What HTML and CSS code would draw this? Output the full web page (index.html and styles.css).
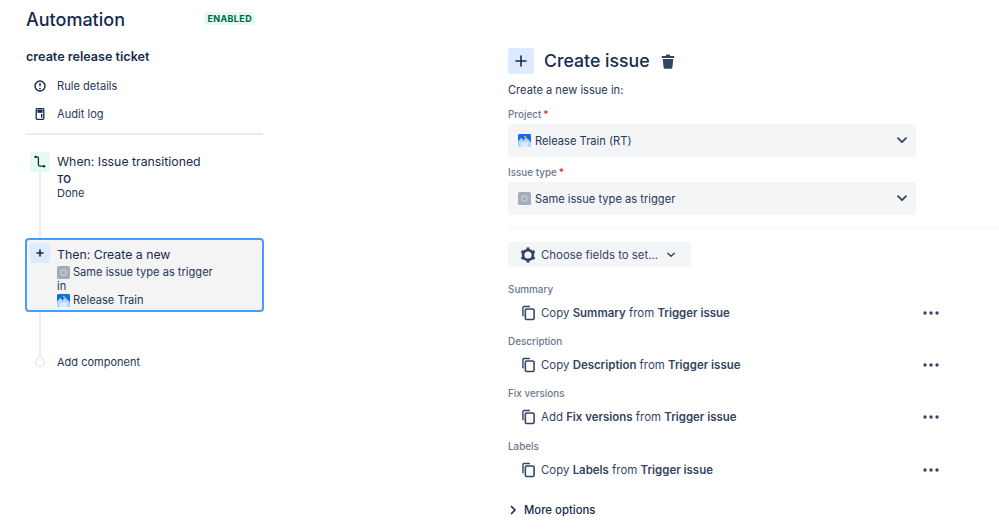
FILE: index.html
```html
<!DOCTYPE html>
<html lang="en">
<head>
<meta charset="utf-8">
<title>Automation</title>
<link rel="stylesheet" href="styles.css">
</head>
<body>
<svg class="defs" width="0" height="0" aria-hidden="true">
  <defs>
    <symbol id="proj" viewBox="0 0 14 14">
      <rect width="14" height="14" rx="1.5" fill="#0f6fe6"/>
      <path d="M0 12 L0 8 L3.5 4 L6 7 L8.5 3.5 L14 9 L14 14 L0 14Z" fill="#b3d4ff"/>
      <path d="M3 14 V9 H11 V14Z" fill="#deebff"/>
      <circle cx="7.5" cy="3" r="1" fill="#ffc400"/>
    </symbol>
    <symbol id="type" viewBox="0 0 14 14">
      <rect width="14" height="14" rx="2" fill="#a5adba"/>
      <circle cx="7" cy="7" r="3" fill="none" stroke="#c1c7d0" stroke-width="1.6"/>
    </symbol>
    <symbol id="copy" viewBox="0 0 14 16">
      <path d="M1 11.5 V2.2 A1.2 1.2 0 0 1 2.2 1 H8.5" fill="none" stroke="#344563" stroke-width="1.5"/>
      <rect x="3.6" y="3.6" width="9.4" height="11.4" rx="1.4" fill="none" stroke="#344563" stroke-width="1.7"/>
    </symbol>
    <symbol id="dots" viewBox="0 0 16 4">
      <circle cx="2" cy="2" r="1.7" fill="#344563"/>
      <circle cx="8" cy="2" r="1.7" fill="#344563"/>
      <circle cx="14" cy="2" r="1.7" fill="#344563"/>
    </symbol>
    <symbol id="chev" viewBox="0 0 10 7">
      <path d="M1 1.2 L5 5.2 L9 1.2" fill="none" stroke="#344563" stroke-width="1.8" stroke-linecap="round" stroke-linejoin="round"/>
    </symbol>
  </defs>
</svg>
<div class="page">
  <aside class="side">
    <header class="side-head">
      <h1 class="app-title">Automation</h1>
      <span class="badge">ENABLED</span>
    </header>
    <h2 class="rule-name">create release ticket</h2>
    <nav class="side-nav">
      <a class="nav-item">
        <svg class="nav-icon" viewBox="0 0 14 14"><circle cx="7" cy="7" r="5" fill="none" stroke="#172b4d" stroke-width="1.4"/><rect x="6.3" y="3.8" width="1.4" height="3.6" rx=".7" fill="#172b4d"/><circle cx="7" cy="9.5" r=".85" fill="#172b4d"/></svg>
        <span>Rule details</span>
      </a>
      <a class="nav-item">
        <svg class="nav-icon" viewBox="0 0 14 14"><rect x="3.2" y="1.6" width="7.6" height="10.8" rx=".8" fill="none" stroke="#172b4d" stroke-width="1.3"/><rect x="4.4" y="2.6" width="5.2" height="3.2" fill="#172b4d"/><rect x="8" y="7" width="1.4" height="3.6" fill="#172b4d"/></svg>
        <span>Audit log</span>
      </a>
    </nav>
    <hr class="side-rule">
    <div class="flow">
      <div class="flow-line"></div>
      <section class="step step-when">
        <span class="step-icon step-icon-green">
          <svg width="14" height="14" viewBox="0 0 14 14"><path d="M2.6 1.8 H4.4 A1 1 0 0 1 5.4 2.8 V9.6 A1.6 1.6 0 0 0 7 11.2 H10.5" fill="none" stroke="#172b4d" stroke-width="1.3"/><circle cx="2.6" cy="1.9" r="1.2" fill="#172b4d"/><circle cx="11" cy="11.2" r="1.2" fill="#172b4d"/></svg>
        </span>
        <div class="step-body">
          <div class="step-title">When: Issue transitioned</div>
          <div class="step-to">TO</div>
          <div class="step-line">Done</div>
        </div>
      </section>
      <section class="step step-then">
        <span class="step-icon step-icon-blue">
          <svg width="10" height="10" viewBox="0 0 10 10"><path d="M5 2 V8 M2 5 H8" stroke="#172b4d" stroke-width="1.6" stroke-linecap="round"/></svg>
        </span>
        <div class="step-body">
          <div class="step-title">Then: Create a new</div>
          <div class="step-line step-item"><svg class="mini"><use href="#type"/></svg>Same issue type as trigger</div>
          <div class="step-line">in</div>
          <div class="step-line step-item"><svg class="mini"><use href="#proj"/></svg>Release Train</div>
        </div>
      </section>
      <section class="step step-add">
        <span class="add-dot"></span>
        <span class="step-line">Add component</span>
      </section>
    </div>
  </aside>
  <main class="main">
    <header class="main-head">
      <span class="big-plus">
        <svg width="14" height="14" viewBox="0 0 14 14"><path d="M7 2 V12 M2 7 H12" stroke="#172b4d" stroke-width="1.6" stroke-linecap="round"/></svg>
      </span>
      <h2 class="main-title">Create issue</h2>
      <svg class="trash" viewBox="0 0 14 15"><path d="M4.8 1.5 A1 1 0 0 1 5.8 .6 H8.2 A1 1 0 0 1 9.2 1.5 L9.3 2 H12.6 A.7 .7 0 0 1 13.3 2.7 V4 H.7 V2.7 A.7 .7 0 0 1 1.4 2 H4.7Z" fill="#344563"/><path d="M1.7 5 H12.3 L11.4 13.5 A1.4 1.4 0 0 1 10 14.8 H4 A1.4 1.4 0 0 1 2.6 13.5Z" fill="#344563"/></svg>
    </header>
    <p class="intro">Create a new issue in:</p>
    <label class="field-label">Project<span class="req">*</span></label>
    <div class="select">
      <svg class="mini"><use href="#proj"/></svg>
      <span class="select-text">Release Train (RT)</span>
      <svg class="chev"><use href="#chev"/></svg>
    </div>
    <label class="field-label field-label-2">Issue type<span class="req">*</span></label>
    <div class="select">
      <svg class="mini"><use href="#type"/></svg>
      <span class="select-text">Same issue type as trigger</span>
      <svg class="chev"><use href="#chev"/></svg>
    </div>
    <hr class="main-rule">
    <button class="choose" type="button">
      <svg class="gear" viewBox="0 0 16 16"><circle cx="8" cy="8" r="4.9" fill="none" stroke="#344563" stroke-width="2.6"/><g stroke="#344563" stroke-width="2.8"><path d="M8 .4 V3"/><path d="M8 13 V15.6"/><path d="M1.4 4.2 L3.7 5.5"/><path d="M12.3 10.5 L14.6 11.8"/><path d="M1.4 11.8 L3.7 10.5"/><path d="M12.3 5.5 L14.6 4.2"/></g></svg>
      <span>Choose fields to set...</span>
      <svg class="chev-small"><use href="#chev"/></svg>
    </button>
    <div class="field">
      <div class="field-name">Summary</div>
      <div class="field-row">
        <svg class="copy"><use href="#copy"/></svg>
        <span class="field-text">Copy <b>Summary</b> from <b>Trigger issue</b></span>
        <svg class="dots"><use href="#dots"/></svg>
      </div>
    </div>
    <div class="field">
      <div class="field-name">Description</div>
      <div class="field-row">
        <svg class="copy"><use href="#copy"/></svg>
        <span class="field-text">Copy <b>Description</b> from <b>Trigger issue</b></span>
        <svg class="dots"><use href="#dots"/></svg>
      </div>
    </div>
    <div class="field">
      <div class="field-name">Fix versions</div>
      <div class="field-row">
        <svg class="copy"><use href="#copy"/></svg>
        <span class="field-text">Add <b>Fix versions</b> from <b>Trigger issue</b></span>
        <svg class="dots"><use href="#dots"/></svg>
      </div>
    </div>
    <div class="field">
      <div class="field-name">Labels</div>
      <div class="field-row">
        <svg class="copy"><use href="#copy"/></svg>
        <span class="field-text">Copy <b>Labels</b> from <b>Trigger issue</b></span>
        <svg class="dots"><use href="#dots"/></svg>
      </div>
    </div>
    <div class="more">
      <svg class="more-chev" viewBox="0 0 7 10"><path d="M1.5 1.5 L5 5 L1.5 8.5" fill="none" stroke="#172b4d" stroke-width="1.7" stroke-linecap="round" stroke-linejoin="round"/></svg>
      <span>More options</span>
    </div>
  </main>
</div>
</body>
</html>
```

FILE: styles.css
```css
* { box-sizing: border-box; }
html, body { margin: 0; padding: 0; background: #fff; }
body {
  width: 999px;
  height: 532px;
  overflow: hidden;
  font-family: Inter, "Liberation Sans", sans-serif;
  font-size: 11.1px;
  line-height: 14px;
  color: #253858;
}
.defs { position: absolute; }
.page { display: flex; height: 532px; }

/* Left column */
.side { width: 508px; flex: none; padding: 10px 0 0 26px; }
.side-head { display: flex; align-items: center; justify-content: space-between; width: 229px; height: 20px; }
.app-title { margin: 0; font-size: 18px; line-height: 20px; font-weight: 500; color: #172b4d; }
.badge {
  background: #e3fcef; color: #006644; font-size: 9px; line-height: 13px; font-weight: 700;
  letter-spacing: .36px; padding: 0 3px; border-radius: 3px; margin-top: -4px;
}
.rule-name { margin: 17px 0 0; font-size: 12.6px; line-height: 20px; font-weight: 600; color: #172b4d; }
.side-nav { margin-top: 5px; display: flex; flex-direction: column; }
.nav-item { display: flex; align-items: center; height: 28px; padding-left: 7px; gap: 10px; color: #253858; font-size: 11.1px; }
.nav-icon { width: 14px; height: 14px; flex: none; }
.side-rule { width: 237px; height: 2px; margin: 5px 0 0; border: 0; background: #ebecf0; }

.flow { position: relative; width: 239px; margin: 0 0 0 -1px; padding-top: 17px; }
.flow-line { position: absolute; left: 14px; top: 36px; width: 2px; height: 186px; background: #ebecf0; }
.step { position: relative; display: flex; }
.step-icon { flex: none; width: 20px; height: 20px; border-radius: 3px; display: flex; align-items: center; justify-content: center; }
.step-icon-green { background: #e3fcef; }
.step-icon-blue { background: #deebff; }
.step-body { margin-left: 7px; min-width: 0; padding-top: 1px; }
.step-when { padding-left: 5px; height: 86px; }
.step-title { font-size: 12.3px; line-height: 18px; color: #172b4d; }
.step-to { font-size: 10px; line-height: 14px; font-weight: 600; color: #172b4d; margin-top: 1px; }
.step-line { font-size: 11px; line-height: 14px; color: #253858; }
.step-item { display: flex; align-items: center; gap: 3px; }
.step-then {
  height: 74px; padding: 3px 0 0 3px;
  background: #f4f4f5; border: 2px solid #4c9aff; border-radius: 4px;
}
.step-then .step-line { font-size: 11.1px; }
.step-then .step-body { padding-top: 3px; }
.step-then .step-title { margin-bottom: 1px; }
.step-add { align-items: center; margin-top: 43px; padding-left: 10px; height: 14px; }
.add-dot { width: 10px; height: 10px; border: 1px solid #dfe1e6; border-radius: 50%; background: #fff; margin-right: 12px; flex: none; }
.mini { width: 13px; height: 13px; flex: none; }

/* Right column */
.main { flex: 1; min-width: 0; padding: 48px 0 0 0; position: relative; }
.main-head { display: flex; align-items: center; height: 26px; }
.big-plus { width: 26px; height: 26px; background: #deebff; border-radius: 3px; display: flex; align-items: center; justify-content: center; flex: none; }
.main-title { margin: 0 0 0 10px; font-size: 17.7px; line-height: 26px; font-weight: 500; color: #172b4d; }
.trash { width: 14px; height: 15px; margin-left: 11px; flex: none; }
.intro { margin: 9px 0 0; font-size: 11.1px; line-height: 14px; color: #253858; }
.field-label { display: block; margin-top: 10px; height: 14px; font-size: 9.9px; line-height: 14px; font-weight: 500; color: #6b778c; }
.field-label-2 { margin-top: 8px; }
.req { color: #de350b; margin-left: 2px; font-weight: 600; }
.select { display: flex; align-items: center; width: 408px; height: 33px; margin-top: 3px; padding: 0 9px 0 10px; background: #f4f5f7; border-radius: 3px; }
.select-text { margin-left: 4px; flex: 1; font-size: 11.15px; color: #253858; }
.chev { width: 10px; height: 7px; flex: none; }
.main-rule { height: 1px; margin: 13px 0 0; border: 0; background: #f4f5f7; }
.choose {
  display: flex; align-items: center; width: 183px; height: 25px; margin: 13px 0 0; padding: 0 0 0 12px;
  background: #f4f5f7; border: 0; border-radius: 3px; font: inherit; font-size: 11.4px; color: #344563;
}
.gear { width: 16px; height: 16px; flex: none; margin-right: 5px; }
.chev-small { width: 8px; height: 6px; margin-left: 9px; flex: none; }
.choose + .field { margin-top: 15px; }
.field-name { height: 14px; font-size: 9.9px; line-height: 14px; font-weight: 500; color: #6b778c; }
.field-row { display: flex; align-items: center; height: 38.2px; padding: 0 0 4px 14px; width: 431px; }
.copy { width: 13px; height: 16px; flex: none; }
.field-text { margin-left: 6px; flex: 1; font-size: 11.45px; color: #344563; }
.field-text b { font-weight: 600; }
.dots { width: 16px; height: 4px; flex: none; }
.more { display: flex; align-items: center; margin-top: 12px; height: 14px; font-size: 11.35px; font-weight: 500; color: #172b4d; }
.more-chev { width: 7px; height: 10px; margin: 0 7px 0 2px; flex: none; }
```
